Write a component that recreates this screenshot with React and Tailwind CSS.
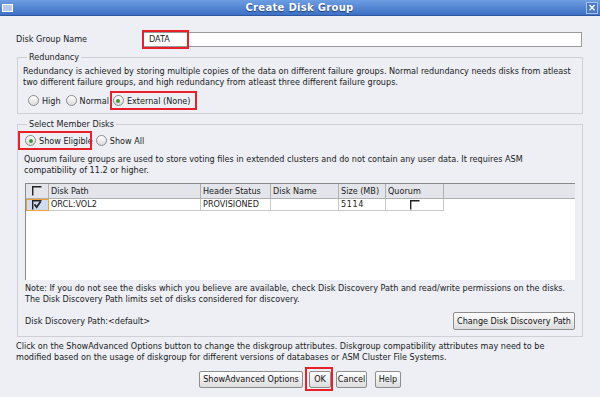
import React from "react";

const Radio = ({ checked, label }) => (
    <span className="flex items-center gap-[3px]">
        <span className="w-[11px] h-[11px] rounded-full border border-[#8a8a8a] bg-gradient-to-b from-white to-[#dcdcdc] flex items-center justify-center">
            {checked && <span className="w-[4px] h-[4px] rounded-full bg-[#3a9a3a]" />}
        </span>
        <span>{label}</span>
    </span>
);

const Check = ({ checked }) => (
    <svg width="10" height="10" viewBox="0 0 10 10">
        <path d="M0.7 9.5 V0.7 H9.5" fill="none" stroke="#222" strokeWidth="1.4" />
        {checked && <path d="M2.5 4.3 L4.6 7.2 L8.6 1.6" fill="none" stroke="#222" strokeWidth="1.7" />}
    </svg>
);

const Btn = ({ children, className = "" }) => (
    <button className={"h-[17px] shrink-0 border border-[#8e8e8e] rounded-[2px] bg-gradient-to-b from-white to-[#dcdcdc] text-[#111] leading-none flex items-center justify-center whitespace-nowrap " + className}>
        {children}
    </button>
);

const App = () => {
    return (
        <div className="w-[600px] h-[397px] bg-[#edeff5] text-[#1a1a1a] text-[8.1px] overflow-hidden whitespace-nowrap" style={{ fontFamily: "'DejaVu Sans', sans-serif" }}>
            {/* title bar */}
            <div className="h-[16px] bg-gradient-to-b from-[#6d9de2] to-[#3e70c4] border-b border-[#2d58a0] flex items-center px-[2px]">
                <div className="w-[11px] h-[8px] border border-white bg-[#b8c8e8]" />
                <div className="flex-1 text-center text-white font-bold text-[10px] tracking-[0.3px] [text-shadow:0_1px_1px_#1d3c78]">Create Disk Group</div>
                <div className="w-[12px] h-[12px] border border-[#a8c4ee] bg-[#4a78c8] text-white text-[10px] font-bold flex items-center justify-center leading-none">×</div>
            </div>

            <div className="pl-[16px] pr-[16px] pt-[16px]">
                {/* disk group name */}
                <div className="flex items-center h-[15px]">
                    <span className="w-[127px]">Disk Group Name</span>
                    <div className="flex-1 h-[15px] border border-[#9a9a9a] bg-white relative flex items-center pl-[5px]">
                        DATA
                        <div className="absolute left-[-2px] top-[-3px] w-[47px] h-[19px] border-2 border-[#e8202a]" />
                    </div>
                    <div className="w-[2px]" />
                </div>

                {/* redundancy */}
                <div className="mt-[10px] ml-[1px] mr-[1px] h-[57px] border border-[#cfcfd6] relative pt-[8px] pl-[5px]">
                    <span className="absolute left-[9px] top-[-6px] bg-[#edeff5] px-[2px] leading-[11px]">Redundancy</span>
                    <div className="leading-[11px]">
                        <div>Redundancy is achieved by storing multiple copies of the data on different failure groups. Normal redundancy needs disks from atleast</div>
                        <div>two different failure groups, and high redundancy from atleast three different failure groups.</div>
                    </div>
                    <div className="flex items-center h-[14px] mt-[6px] pl-[5px]">
                        <Radio label="High" />
                        <span className="ml-[5px]"><Radio label="Normal" /></span>
                        <span className="relative ml-[4px]">
                            <Radio checked label="External (None)" />
                            <span className="absolute left-[-3px] top-[-4px] w-[87px] h-[19px] border-2 border-[#e8202a]" />
                        </span>
                    </div>
                </div>

                {/* select member disks */}
                <div className="mt-[10px] ml-[1px] mr-[1px] h-[213px] border border-[#cfcfd6] relative pt-[9px] pl-[6px] pr-[7px]">
                    <span className="absolute left-[9px] top-[-6px] bg-[#edeff5] px-[2px] leading-[11px]">Select Member Disks</span>
                    <div className="flex items-center h-[14px]">
                        <span className="relative ml-[1px]">
                            <Radio checked label="Show Eligible" />
                            <span className="absolute left-[-7px] top-[-4px] w-[74px] h-[19px] border-2 border-[#e8202a]" />
                        </span>
                        <span className="ml-[3px]"><Radio label="Show All" /></span>
                    </div>
                    <div className="leading-[11px] mt-[6px]">
                        <div>Quorum failure groups are used to store voting files in extended clusters and do not contain any user data. It requires ASM</div>
                        <div>compatibility of 11.2 or higher.</div>
                    </div>

                    {/* table */}
                    <div className="mt-[7px] ml-[1px] h-[97px] bg-white border-l border-t border-[#8a8a8a]">
                        <div className="flex h-[15px] bg-[#e4e5ea] border-b border-[#b0b0b0]">
                            <div className="w-[23px] flex items-center justify-center border-r border-[#b0b0b0]"><Check /></div>
                            <div className="w-[152px] pl-[2px] border-r border-[#b0b0b0] flex items-center">Disk Path</div>
                            <div className="w-[70px] pl-[2px] border-r border-[#b0b0b0] flex items-center">Header Status</div>
                            <div className="w-[68px] pl-[2px] border-r border-[#b0b0b0] flex items-center">Disk Name</div>
                            <div className="w-[47px] pl-[2px] border-r border-[#b0b0b0] flex items-center">Size (MB)</div>
                            <div className="w-[58px] pl-[2px] border-r border-[#b0b0b0] flex items-center">Quorum</div>
                            <div className="flex-1" />
                        </div>
                        <div className="flex h-[12px]">
                            <div className="w-[23px] flex items-center justify-center border-r border-b border-[#c8c8c8] bg-[#cddcf0] outline outline-1 outline-[#f0a030] -outline-offset-1"><Check checked /></div>
                            <div className="w-[152px] pl-[2px] border-r border-b border-[#c8c8c8] flex items-center">ORCL:VOL2</div>
                            <div className="w-[70px] pl-[2px] border-r border-b border-[#c8c8c8] flex items-center">PROVISIONED</div>
                            <div className="w-[68px] pl-[2px] border-r border-b border-[#c8c8c8]" />
                            <div className="w-[47px] pl-[2px] border-r border-b border-[#c8c8c8] flex items-center tracking-[0.6px]">5114</div>
                            <div className="w-[58px] border-r border-b border-[#c8c8c8] flex items-center justify-center"><Check /></div>
                        </div>
                    </div>

                    <div className="leading-[11px] mt-[3px] pl-[1px]">
                        <div>Note: If you do not see the disks which you believe are available, check Disk Discovery Path and read/write permissions on the disks.</div>
                        <div>The Disk Discovery Path limits set of disks considered for discovery.</div>
                    </div>
                    <div className="flex items-center justify-between mt-[7px] pl-[1px] h-[18px]">
                        <span>Disk Discovery Path:&lt;default&gt;</span>
                        <Btn className="w-[122px] h-[18px]">Change Disk Discovery Path</Btn>
                    </div>
                </div>

                <div className="leading-[11px] mt-[4px]">
                    <div>Click on the ShowAdvanced Options button to change the diskgroup attributes. Diskgroup compatibility attributes may need to be</div>
                    <div>modified based on the usage of diskgroup for different versions of databases or ASM Cluster File Systems.</div>
                </div>

                <div className="flex justify-center items-center mt-[8px]">
                    <Btn className="w-[104px]">ShowAdvanced Options</Btn>
                    <span className="relative ml-[6px]">
                        <Btn className="w-[22px]">OK</Btn>
                        <span className="absolute left-[-4px] top-[-4px] w-[28px] h-[24px] border-2 border-[#e8202a]" />
                    </span>
                    <Btn className="w-[31px] ml-[5px]">Cancel</Btn>
                    <Btn className="w-[26px] ml-[8px]">Help</Btn>
                </div>
            </div>
        </div>
    );
};

export default App;
